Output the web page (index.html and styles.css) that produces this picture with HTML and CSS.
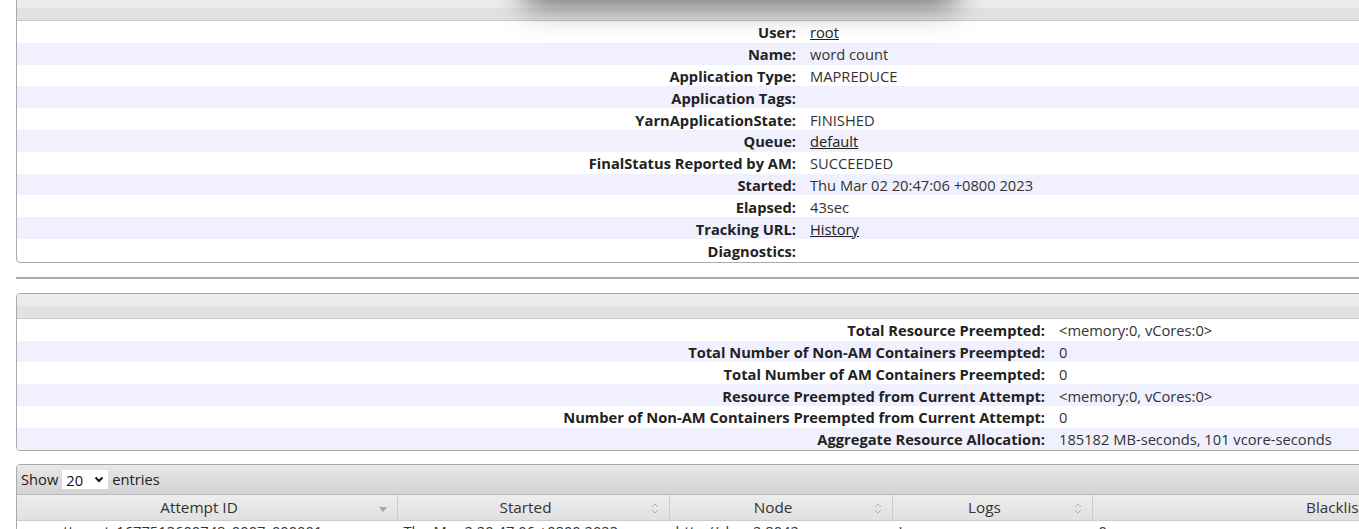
FILE: index.html
```html
<!DOCTYPE html>
<html>
<head>
<meta charset="utf-8">
<link rel="stylesheet" href="styles.css">
</head>
<body>
<div class="popup-shadow"></div>
<div class="page">
  <div class="panel panel-first">
    <div class="panel-head"></div>
    <table class="info info-app">
      <tr><th>User:</th><td><a href="#">root</a></td></tr>
      <tr><th>Name:</th><td>word count</td></tr>
      <tr><th>Application Type:</th><td>MAPREDUCE</td></tr>
      <tr><th>Application Tags:</th><td></td></tr>
      <tr><th>YarnApplicationState:</th><td>FINISHED</td></tr>
      <tr><th>Queue:</th><td><a href="#">default</a></td></tr>
      <tr><th>FinalStatus Reported by AM:</th><td>SUCCEEDED</td></tr>
      <tr><th>Started:</th><td>Thu Mar 02 20:47:06 +0800 2023</td></tr>
      <tr><th>Elapsed:</th><td>43sec</td></tr>
      <tr><th>Tracking URL:</th><td><a href="#">History</a></td></tr>
      <tr><th>Diagnostics:</th><td></td></tr>
    </table>
  </div>
  <div class="rule"></div>
  <div class="panel panel-res">
    <div class="panel-head"></div>
    <table class="info info-res">
      <tr><th>Total Resource Preempted:</th><td>&lt;memory:0, vCores:0&gt;</td></tr>
      <tr><th>Total Number of Non-AM Containers Preempted:</th><td>0</td></tr>
      <tr><th>Total Number of AM Containers Preempted:</th><td>0</td></tr>
      <tr><th>Resource Preempted from Current Attempt:</th><td>&lt;memory:0, vCores:0&gt;</td></tr>
      <tr><th>Number of Non-AM Containers Preempted from Current Attempt:</th><td>0</td></tr>
      <tr><th>Aggregate Resource Allocation:</th><td>185182 MB-seconds, 101 vcore-seconds</td></tr>
    </table>
  </div>
  <div class="panel panel-attempts">
    <div class="dt-toolbar">
      <label class="dt-length">Show
        <span class="select-wrap">
          <select><option>20</option></select>
          <svg class="select-arrow" width="10" height="7" viewBox="0 0 10 7"><path d="M1.5 1.5 L5 5 L8.5 1.5" fill="none" stroke="#111" stroke-width="2"/></svg>
        </span>
        entries</label>
    </div>
    <table class="attempts">
      <thead>
        <tr>
          <th class="c1">Attempt ID<span class="sort sort-desc"><svg width="8" height="5" viewBox="0 0 8 5"><path d="M0 0 H8 L4 5 Z" fill="#a8a8a8"/></svg></span></th>
          <th class="c2">Started<span class="sort"><svg width="8" height="11" viewBox="0 0 8 11"><path d="M1 4 L4 1 L7 4 M1 7 L4 10 L7 7" fill="none" stroke="#b0b0b0" stroke-width="1"/></svg></span></th>
          <th class="c3">Node<span class="sort"><svg width="8" height="11" viewBox="0 0 8 11"><path d="M1 4 L4 1 L7 4 M1 7 L4 10 L7 7" fill="none" stroke="#b0b0b0" stroke-width="1"/></svg></span></th>
          <th class="c4">Logs<span class="sort"><svg width="8" height="11" viewBox="0 0 8 11"><path d="M1 4 L4 1 L7 4 M1 7 L4 10 L7 7" fill="none" stroke="#b0b0b0" stroke-width="1"/></svg></span></th>
          <th class="c5">Blacklisted Nodes</th>
        </tr>
      </thead>
      <tbody>
        <tr>
          <td class="c1"><a href="#">appattempt_1677513600748_0007_000001</a></td>
          <td>Thu Mar 2 20:47:06 +0800 2023</td>
          <td><a href="#">http://slave2:8042</a></td>
          <td><a href="#">Logs</a></td>
          <td>0</td>
        </tr>
      </tbody>
    </table>
  </div>
</div>
</body>
</html>
```
FILE: styles.css
```css
html, body {
  margin: 0;
  padding: 0;
  background: #fff;
  overflow: hidden;
}
body {
  font-family: "Open Sans", "Liberation Sans", sans-serif;
  font-size: 14.7px;
  color: #222;
}
.popup-shadow {
  position: absolute;
  left: 525px;
  top: -52px;
  width: 430px;
  height: 50px;
  background: #fff;
  box-shadow: 0 8px 30px rgba(0, 0, 0, 0.55);
  z-index: 5;
}
.page {
  width: 1647px;
  padding-left: 16px;
}
.panel {
  border: 1px solid #aaa;
  border-radius: 4px;
  overflow: hidden;
  background: #fff;
}
.panel-first {
  margin-top: -6px;
}
.panel-head {
  height: 24px;
  border-bottom: 1px solid #c8c8c8;
  background: linear-gradient(#ebebeb 0, #ebebeb 50%, #e2e2e2 50%, #e2e2e2 100%);
}
.panel-first .panel-head {
  height: 25px;
}
table {
  border-collapse: collapse;
}
.info {
  width: 100%;
}
.info tr {
  height: 21.8px;
}
.info-app tr:last-child {
  height: 22.8px;
}
.info tr:nth-child(even) {
  background: #f0f0ff;
}
.info th {
  text-align: right;
  font-weight: bold;
  padding: 1px 7px 0;
  line-height: 18px;
  white-space: nowrap;
}
.info td {
  text-align: left;
  padding: 1px 7px 0;
  line-height: 18px;
  color: #333;
}
.info-app th { width: 772px; }
.info-res th { width: 1021px; }
a {
  color: #222;
  text-decoration: underline;
}
.rule {
  height: 2px;
  background: #aaa;
  margin: 14px 0 14px;
}
.panel-attempts {
  margin-top: 13px;
}
.dt-toolbar {
  height: 29px;
  border-bottom: 1px solid #bbb;
  background: linear-gradient(#e8e8e8, #d3d3d3);
  display: flex;
  align-items: center;
  padding-left: 4px;
}
.dt-length {
  display: flex;
  align-items: center;
  gap: 4px;
  color: #222;
}
.select-wrap {
  position: relative;
  display: inline-block;
}
.select-wrap select {
  appearance: none;
  -webkit-appearance: none;
  border: none;
  border-radius: 0;
  background: #fff;
  font: inherit;
  color: #111;
  width: 46px;
  height: 19px;
  padding: 0 0 0 4px;
  display: block;
}
.select-arrow {
  position: absolute;
  right: 4px;
  top: 6px;
  pointer-events: none;
}
.attempts {
  width: 100%;
  table-layout: fixed;
}
.attempts th {
  height: 25px;
  font-weight: normal;
  font-size: 15.3px;
  color: #333;
  background: linear-gradient(#ededed, #e0e0e0);
  border-right: 1px solid #ccc;
  border-bottom: 1px solid #ccc;
  position: relative;
  text-align: center;
  padding: 0 18px 0 2px;
}
.attempts th.c1 { width: 360px; }
.attempts th.c2 { width: 251px; }
.attempts th.c3 { width: 202px; }
.attempts th.c4 { width: 179px; }
.sort {
  position: absolute;
  right: 10px;
  top: 8px;
  line-height: 0;
}
.sort-desc { top: 11px; }
.attempts td {
  padding: 1px 6px 4px;
  height: 18px;
  line-height: 18px;
  white-space: nowrap;
  color: #333;
}
.attempts td.c1 {
  padding-left: 12px;
}
.attempts td a {
  color: #333;
  text-decoration: none;
}
```
